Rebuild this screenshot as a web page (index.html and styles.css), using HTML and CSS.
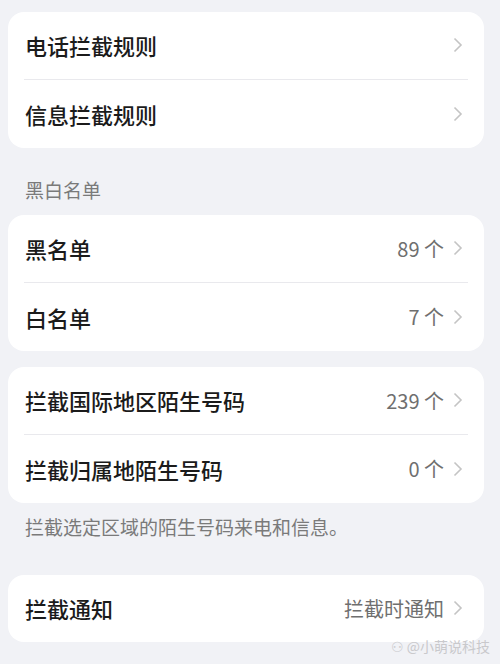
FILE: index.html
```html
<!DOCTYPE html>
<html lang="zh-CN">
    <head>
        <meta charset="UTF-8">
        <meta name="viewport" content="width=device-width, initial-scale=1.0">
        <title>骚扰拦截设置</title>
        <link rel="stylesheet" href="styles.css">
    </head>

    <body>
        <div class="page">

            <!-- 拦截规则 -->
            <div class="card">
                <div class="row">
                    <span class="title">电话拦截规则</span>
                    <svg class="chevron" viewBox="0 0 10 16"><path d="M1.5 1.5 L8 8 L1.5 14.5"/></svg>
                </div>
                <div class="divider"></div>
                <div class="row">
                    <span class="title">信息拦截规则</span>
                    <svg class="chevron" viewBox="0 0 10 16"><path d="M1.5 1.5 L8 8 L1.5 14.5"/></svg>
                </div>
            </div>

            <!-- 黑白名单 -->
            <div class="section-title">黑白名单</div>
            <div class="card">
                <div class="row">
                    <span class="title">黑名单</span>
                    <span class="value">89 个</span>
                    <svg class="chevron" viewBox="0 0 10 16"><path d="M1.5 1.5 L8 8 L1.5 14.5"/></svg>
                </div>
                <div class="divider"></div>
                <div class="row">
                    <span class="title">白名单</span>
                    <span class="value">7 个</span>
                    <svg class="chevron" viewBox="0 0 10 16"><path d="M1.5 1.5 L8 8 L1.5 14.5"/></svg>
                </div>
            </div>

            <!-- 陌生号码 -->
            <div class="card card-gap">
                <div class="row">
                    <span class="title">拦截国际地区陌生号码</span>
                    <span class="value">239 个</span>
                    <svg class="chevron" viewBox="0 0 10 16"><path d="M1.5 1.5 L8 8 L1.5 14.5"/></svg>
                </div>
                <div class="divider"></div>
                <div class="row">
                    <span class="title">拦截归属地陌生号码</span>
                    <span class="value">0 个</span>
                    <svg class="chevron" viewBox="0 0 10 16"><path d="M1.5 1.5 L8 8 L1.5 14.5"/></svg>
                </div>
            </div>
            <div class="note">拦截选定区域的陌生号码来电和信息。</div>

            <!-- 拦截通知 -->
            <div class="card">
                <div class="row">
                    <span class="title">拦截通知</span>
                    <span class="value">拦截时通知</span>
                    <svg class="chevron" viewBox="0 0 10 16"><path d="M1.5 1.5 L8 8 L1.5 14.5"/></svg>
                </div>
            </div>

            <div class="watermark">⚇ @小萌说科技</div>
        </div>
    </body>
</html>
```

FILE: styles.css
```css
body {
    margin: 0;
    background-color: #f1f2f6;
    font-family: "Noto Sans CJK SC", "Noto Sans", sans-serif;
}
.page {
    position: relative;
    width: 500px;
    height: 664px;
    box-sizing: border-box;
    padding: 11.5px 16px 0 8px;
}
.card {
    background-color: #fff;
    border-radius: 16px;
}
.card-gap {
    margin-top: 16px;
}
.row {
    display: flex;
    align-items: center;
    height: 67.5px;
    padding: 0 21px 0 17px;
}
.title {
    flex: 1;
    font-size: 22px;
    font-weight: 500;
    color: #1b1b1b;
}
.value {
    font-size: 20px;
    color: #6f6f6f;
    margin-right: 9px;
}
.chevron {
    width: 10px;
    height: 16px;
    fill: none;
    stroke: #c4c4c4;
    stroke-width: 1.6;
}
.divider {
    height: 1px;
    margin: 0 16px;
    background-color: #e9e9ed;
}
.section-title {
    font-size: 19px;
    line-height: 26px;
    color: #7a7a7a;
    padding: 29px 17px 12px;
}
.note {
    font-size: 19px;
    line-height: 26px;
    color: #7a7a7a;
    padding: 11px 17px 35px;
}
.watermark {
    position: absolute;
    right: 10px;
    top: 636px;
    font-size: 14px;
    color: #c9c9cc;
}
```
